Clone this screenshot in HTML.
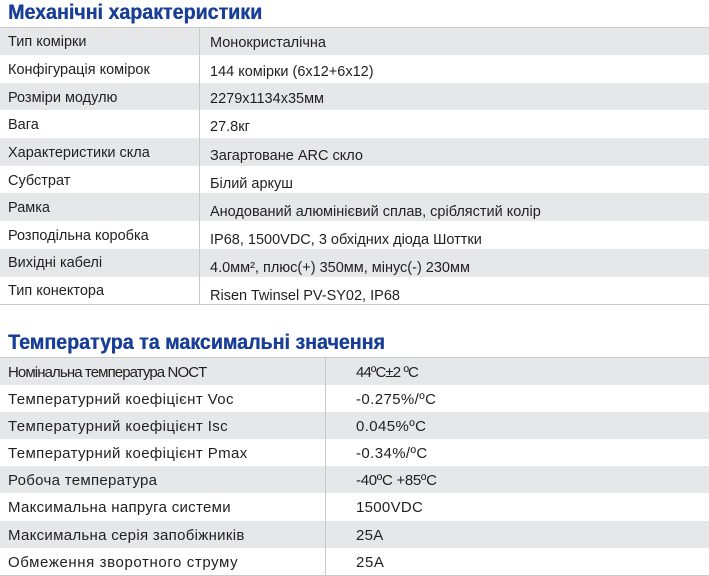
<!DOCTYPE html>
<html><head><meta charset="utf-8"><style>
body{margin:0;width:709px;height:576px;background:#fff;position:relative;overflow:hidden;font-family:"Liberation Sans",sans-serif;color:#231f20}
.t{position:absolute;left:8px;font-weight:bold;color:#183e97;font-size:21px;white-space:nowrap;transform:scaleX(0.935);transform-origin:0 0;text-shadow:0.4px 0 0 #183e97}
.r{position:absolute;left:0;width:709px;font-size:14.5px;white-space:nowrap}
.b .r{font-size:15px;letter-spacing:0.4px}
.g{background:#e6e7e8}
.r span{position:absolute}
.l{position:absolute;width:1px;background:#c8c9cb}
.h{position:absolute;left:0;width:709px;height:1px;background:#c8c9cb}
</style></head><body>
<div class="t" style="top:1px">Механічні характеристики</div>
<div class="h" style="top:27px"></div>
<div class="r g" style="top:28px;height:27px"><span style="left:8px;top:6px">Тип комірки</span><span style="left:210px;top:7px">Монокристалічна</span></div>
<div class="r" style="top:55px;height:28px"><span style="left:8px;top:7px">Конфігурація комірок</span><span style="left:210px;top:9px">144 комірки (6x12+6x12)</span></div>
<div class="r g" style="top:83px;height:27px"><span style="left:8px;top:7px">Розміри модулю</span><span style="left:210px;top:8px">2279x1134x35мм</span></div>
<div class="r" style="top:110px;height:28px"><span style="left:8px;top:7px">Вага</span><span style="left:210px;top:9px">27.8кг</span></div>
<div class="r g" style="top:138px;height:28px"><span style="left:8px;top:7px">Характеристики скла</span><span style="left:210px;top:10px">Загартоване ARC скло</span></div>
<div class="r" style="top:166px;height:27px"><span style="left:8px;top:7px">Субстрат</span><span style="left:210px;top:10px">Білий аркуш</span></div>
<div class="r g" style="top:193px;height:28px"><span style="left:8px;top:7px">Рамка</span><span style="left:210px;top:11px">Анодований алюмінієвий сплав, сріблястий колір</span></div>
<div class="r" style="top:221px;height:28px"><span style="left:8px;top:7px">Розподільна коробка</span><span style="left:210px;top:11px">IP68, 1500VDC, 3 обхідних діода Шоттки</span></div>
<div class="r g" style="top:249px;height:28px"><span style="left:8px;top:6px">Вихідні кабелі</span><span style="left:210px;top:11px">4.0мм², плюс(+) 350мм, мінус(-) 230мм</span></div>
<div class="r" style="top:277px;height:27px"><span style="left:8px;top:6px">Тип конектора</span><span style="left:210px;top:11px">Risen Twinsel PV-SY02, IP68</span></div>
<div class="h" style="top:304px"></div>
<div class="l" style="left:199px;top:28px;height:276px"></div>

<div class="t" style="top:331px">Температура та максимальні значення</div>
<div class="b">
<div class="h" style="top:357px"></div>
<div class="r g" style="top:358px;height:27px;letter-spacing:-0.9px"><span style="left:8px;top:6px">Номінальна температура NOCT</span><span style="left:356px;top:6px">44ºC±2 ºC</span></div>
<div class="r" style="top:385px;height:27px"><span style="left:8px;top:6px">Температурний коефіцієнт Voc</span><span style="left:356px;top:6px">-0.275%/ºC</span></div>
<div class="r g" style="top:412px;height:27px"><span style="left:8px;top:6px">Температурний коефіцієнт Isc</span><span style="left:356px;top:6px">0.045%ºC</span></div>
<div class="r" style="top:439px;height:27px"><span style="left:8px;top:6px">Температурний коефіцієнт Pmax</span><span style="left:356px;top:6px">-0.34%/ºC</span></div>
<div class="r g" style="top:466px;height:27px;letter-spacing:0.3px"><span style="left:8px;top:6px">Робоча температура</span><span style="left:356px;top:6px;letter-spacing:-0.3px">-40ºC +85ºC</span></div>
<div class="r" style="top:493px;height:28px;letter-spacing:0.3px"><span style="left:8px;top:6px">Максимальна напруга системи</span><span style="left:356px;top:6px">1500VDC</span></div>
<div class="r g" style="top:521px;height:27px;letter-spacing:0.3px"><span style="left:8px;top:6px">Максимальна серія запобіжників</span><span style="left:356px;top:6px">25A</span></div>
<div class="r" style="top:548px;height:27px;letter-spacing:0.6px"><span style="left:8px;top:6px">Обмеження зворотного струму</span><span style="left:356px;top:6px">25A</span></div>
<div class="h" style="top:575px"></div>
<div class="l" style="left:325px;top:358px;height:217px"></div>
</div>
</body></html>
